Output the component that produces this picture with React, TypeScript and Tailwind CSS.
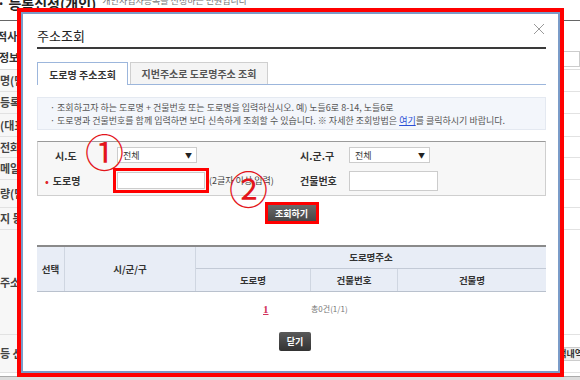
const BG_ROWS = [
  { h: 22, label: '명(단' },
  { h: 22, label: '등록' },
  { h: 23, label: '(대표' },
  { h: 21, label: '전화' },
  { h: 22, label: '메일' },
  { h: 28, label: '량(단' },
  { h: 22, label: '지 등' },
  { h: 105, label: '주소' },
  { h: 38, label: '등 선' },
]

function BackgroundPage() {
  return (
    <div className="flex flex-col w-full h-full">
      <div className="h-[21px] border-b border-[#666] flex items-start overflow-hidden">
        <span className="-mt-[7px] -ml-[3px] text-[14px] font-bold text-[#222] whitespace-nowrap">· 등록신청(개인)</span>
        <span className="-mt-[6px] ml-[6px] text-[9px] text-[#777] whitespace-nowrap">개인사업자등록을 신청하는 민원입니다</span>
      </div>
      <div className="h-[49px] border-b border-[#ddd] flex">
        <div className="w-[90px] flex flex-col pt-[8px] gap-[6px]">
          <span className="-ml-[13px] text-[11px] font-bold text-[#333] leading-[15px] whitespace-nowrap">인적사항</span>
          <span className="-ml-[1px] text-[11px] font-bold text-[#333] leading-[15px]">정보</span>
        </div>
        <div className="flex-1 flex justify-end items-end pb-[2px]">
          <div className="w-[18px] h-[16px] border border-[#ccc] bg-white" />
        </div>
      </div>
      {BG_ROWS.map((r) => (
        <div key={r.label} className="flex border-b border-[#e2e2e2]" style={{ height: r.h }}>
          <div className="w-[90px] bg-[#f7f7f7] flex items-center">
            <span className="text-[11px] text-[#444] font-bold whitespace-nowrap">{r.label}</span>
          </div>
          <div className="flex-1 flex justify-end items-center">
            {r.label === '등 선' && (
              <span className="mr-[-6px] px-[2px] h-[14px] bg-[#eee] border border-[#ccc] text-[9px] font-bold text-[#333] leading-[12px]">적내역</span>
            )}
          </div>
        </div>
      ))}
      <div className="flex-1" />
      <div className="h-[4px] bg-[#ddd] border-t border-[#aaa]" />
    </div>
  )
}

function SelectBox({ width }: { width: string }) {
  return (
    <div className={`${width} h-[16px] bg-white border border-[#ccc] flex items-center justify-between pl-[5px] pr-[4px]`}>
      <span className="text-[9px] text-[#333] leading-none">전체</span>
      <span className="text-[7px] text-[#222] leading-none">▼</span>
    </div>
  )
}

function AddressModal() {
  return (
    <div className="absolute left-[17px] top-[8px] w-[547px] h-[369px] border-[4px] border-[#ff0000]">
      <div className="w-full h-full border-[2px] border-[#7b9cc8] bg-white pl-[14px] pr-[12px] flex flex-col relative">
        <div className="h-[35px] pt-[8px] border-b-[2px] border-[#3a3a3a]">
          <span className="text-[13px] leading-[20px] text-[#222]">주소조회</span>
        </div>
        <svg className="absolute right-[13px] top-[9px]" width="12" height="12" viewBox="0 0 12 12">
          <path d="M1 1 L11 11 M11 1 L1 11" stroke="#9a9a9a" strokeWidth="1" />
        </svg>

        <div className="mt-[13px] h-[23px] flex items-end gap-[2px] border-b border-[#9cb6dc]">
          <div className="w-[91px] h-[23px] -mb-[1px] bg-white border border-b-0 border-[#9cb6dc] flex items-center justify-center">
            <span className="text-[10px] font-bold text-[#333]">도로명 주소조회</span>
          </div>
          <div className="w-[138px] h-[22px] bg-[#f4f4f4] border border-b-0 border-[#cfcfcf] flex items-center justify-center">
            <span className="text-[10px] font-bold text-[#555]">지번주소로 도로명주소 조회</span>
          </div>
        </div>

        <div className="mt-[12px] h-[33px] bg-[#f3f6fb] border border-[#e4e9f1] pl-[12px] pt-[3px] text-[9px] leading-[13px] text-[#555] whitespace-nowrap">
          <p>· 조회하고자 하는 도로명 + 건물번호 또는 도로명을 입력하십시오. 예) 노들6로 8-14, 노들6로</p>
          <p>
            · 도로명과 건물번호를 함께 입력하면 보다 신속하게 조회할 수 있습니다. ※ 자세한 조회방법은{' '}
            <span className="text-[#2a4fd6] underline">여기</span>를 클릭하시기 바랍니다.
          </p>
        </div>

        <div className="mt-[11px] h-[55px] bg-[#f7f7f7] border border-[#cfcfcf] border-t-[#9a9a9a] flex flex-col pt-[5px] gap-[5px]">
          <div className="h-[16px] flex items-center">
            <span className="ml-[17px] w-[62px] text-[10px] font-bold text-[#333]">시.도</span>
            <SelectBox width="w-[80px]" />
            <span className="ml-[103px] w-[49px] text-[10px] font-bold text-[#333]">시.군.구</span>
            <SelectBox width="w-[81px]" />
          </div>
          <div className="h-[25px] flex items-center">
            <span className="ml-[7px] w-[68px] text-[10px] font-bold text-[#333]">
              <span className="text-[#e0262a] mr-[4px]">•</span>도로명
            </span>
            <div className="border-[3px] border-[#ff0000] p-[1px]">
              <div className="w-[88px] h-[17px] bg-white border border-[#ccc]" />
            </div>
            <span className="w-[91px] text-[9px] text-[#444] whitespace-nowrap">(2글자 이상 입력)</span>
            <span className="w-[49px] text-[10px] font-bold text-[#333]">건물번호</span>
            <div className="w-[89px] h-[20px] bg-white border border-[#ccc]" />
          </div>
        </div>

        <div className="mt-[6px] flex justify-center">
          <div className="border-[3px] border-[#ff0000] w-[54px] h-[22px]">
            <div className="w-full h-full bg-gradient-to-b from-[#6a6a6a] to-[#474747] flex items-center justify-center">
              <span className="text-[9px] font-bold text-white leading-none">조회하기</span>
            </div>
          </div>
        </div>

        <div className="mt-[21px] grid grid-cols-[28px_131px_115px_87px_1fr] grid-rows-[22px_22px] border-t-[2px] border-[#8a8a8a] border-b border-b-[#b9c1cd] bg-[#e8edf6] text-[9.5px] font-bold text-[#333]">
          <div className="row-span-2 border-r border-[#cfd6e1] flex items-center justify-center">선택</div>
          <div className="row-span-2 border-r border-[#cfd6e1] flex items-center justify-center">시/군/구</div>
          <div className="col-span-3 border-b border-[#c3cad6] flex items-center justify-center">도로명주소</div>
          <div className="border-r border-[#cfd6e1] flex items-center justify-center">도로명</div>
          <div className="border-r border-[#cfd6e1] flex items-center justify-center">건물번호</div>
          <div className="flex items-center justify-center">건물명</div>
        </div>

        <div className="mt-[10px] h-[14px] flex items-center">
          <span className="ml-[226px] w-[48px] text-[11px] font-bold text-[#d2335c] underline font-['Liberation_Serif',serif]">1</span>
          <span className="text-[8px] text-[#777]">총0건(1/1)</span>
        </div>

        <div className="mt-[16px] pl-[242px]">
          <div className="w-[32px] h-[19px] rounded-[2px] bg-gradient-to-b from-[#5a5a5a] to-[#333] flex items-center justify-center">
            <span className="text-[9px] font-bold text-white leading-none">닫기</span>
          </div>
        </div>
      </div>
    </div>
  )
}

export default function App() {
  return (
    <div className="relative w-[580px] h-[380px] overflow-hidden bg-white font-['Noto_Sans_CJK_KR',sans-serif]">
      <BackgroundPage />
      <AddressModal />
      <span className="absolute left-[85px] top-[134px] text-[39px] leading-none text-[#e3151b] font-['DejaVu_Serif','Noto_Sans_CJK_KR',serif]">①</span>
      <span className="absolute left-[229px] top-[171px] text-[39px] leading-none text-[#e3151b] font-['DejaVu_Serif','Noto_Sans_CJK_KR',serif]">②</span>
    </div>
  )
}
